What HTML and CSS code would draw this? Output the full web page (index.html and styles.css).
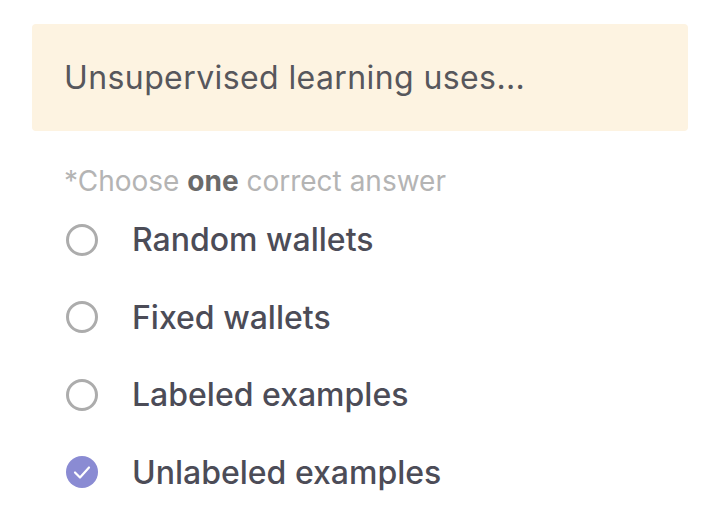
FILE: index.html
```html
<!DOCTYPE html>
<html>
<head>
<meta charset="utf-8">
<link rel="stylesheet" href="styles.css">
</head>
<body>
<div class="page">
  <div class="question">Unsupervised learning uses...</div>
  <div class="hint">*Choose <b>one</b> correct answer</div>
  <ul class="options">
    <li class="option"><span class="radio"></span><span class="label">Random wallets</span></li>
    <li class="option"><span class="radio"></span><span class="label">Fixed wallets</span></li>
    <li class="option"><span class="radio"></span><span class="label">Labeled examples</span></li>
    <li class="option"><span class="radio checked"><svg viewBox="0 0 32 32" width="32" height="32"><path d="M9 16.5 L14 21.5 L23 11.5" fill="none" stroke="#fff" stroke-width="2.2" stroke-linecap="round" stroke-linejoin="round"/></svg></span><span class="label">Unlabeled examples</span></li>
  </ul>
</div>
</body>
</html>
```

FILE: styles.css
```css
html, body { margin: 0; padding: 0; background: #fff; }
body { font-family: Inter, "Noto Sans", sans-serif; }
.page { padding: 24px 32px 0 32px; }
.question {
  background: #fdf3e1;
  border-radius: 4px;
  height: 107px;
  box-sizing: border-box;
  padding: 0 32px;
  display: flex;
  align-items: center;
  font-size: 32px;
  font-weight: 400;
  letter-spacing: 0.4px;
  color: #57575c;
}
.hint {
  margin-top: 33px;
  padding-left: 32px;
  font-size: 28px;
  color: #b4b4b4;
  line-height: 34px;
}
.hint b { color: #6a6a6a; font-weight: 700; }
.options { list-style: none; margin: 3px 0 0 0; padding: 0 0 0 34px; }
.option { display: flex; align-items: center; height: 77.5px; }
.radio {
  width: 32px; height: 32px; box-sizing: border-box;
  border: 3px solid #acacac; border-radius: 50%;
  flex: none; display: flex; align-items: center; justify-content: center;
}
.radio.checked { background: #8a8bd3; border: none; }
.label {
  margin-left: 34px;
  font-size: 32px;
  font-weight: 500;
  color: #4c4c57;
}
```
